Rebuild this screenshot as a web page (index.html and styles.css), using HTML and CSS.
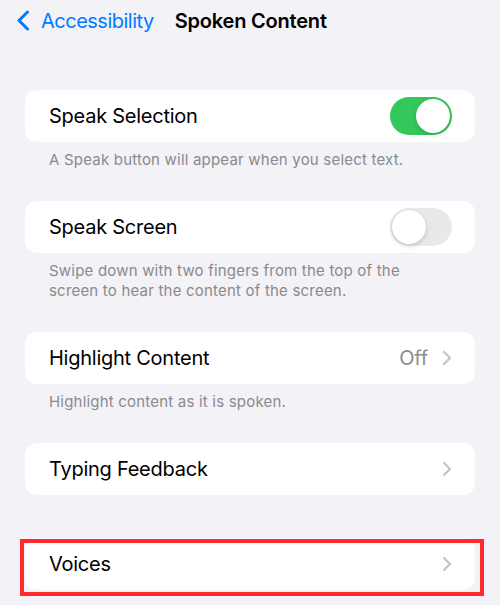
FILE: index.html
```html
<!DOCTYPE html>
<html lang="en">
<head>
<meta charset="utf-8">
<title>Spoken Content</title>
<link rel="stylesheet" href="styles.css">
</head>
<body>
<header class="navbar">
  <a class="back" href="#">
    <svg class="back-icon" width="14" height="21" viewBox="0 0 14 21" aria-hidden="true">
      <path d="M11.5 2 L3 10.5 L11.5 19" fill="none" stroke="currentColor" stroke-width="3" stroke-linecap="round" stroke-linejoin="round"/>
    </svg>
    <span>Accessibility</span>
  </a>
  <h1 class="title">Spoken Content</h1>
</header>

<main class="list">
  <section class="group">
    <div class="card row">
      <span class="label">Speak Selection</span>
      <span class="switch on"><span class="knob"></span></span>
    </div>
    <p class="footer">A Speak button will appear when you select text.</p>
  </section>

  <section class="group">
    <div class="card row">
      <span class="label">Speak Screen</span>
      <span class="switch"><span class="knob"></span></span>
    </div>
    <p class="footer">Swipe down with two fingers from the top of the screen to hear the content of the screen.</p>
  </section>

  <section class="group">
    <div class="card row">
      <span class="label">Highlight Content</span>
      <span class="detail">Off</span>
      <svg class="chevron" width="10" height="16" viewBox="0 0 10 16" aria-hidden="true">
        <path d="M2 2 L8 8 L2 14" fill="none" stroke="currentColor" stroke-width="2.2" stroke-linecap="round" stroke-linejoin="round"/>
      </svg>
    </div>
    <p class="footer">Highlight content as it is spoken.</p>
  </section>

  <section class="group no-footer">
    <div class="card row">
      <span class="label">Typing Feedback</span>
      <svg class="chevron" width="10" height="16" viewBox="0 0 10 16" aria-hidden="true">
        <path d="M2 2 L8 8 L2 14" fill="none" stroke="currentColor" stroke-width="2.2" stroke-linecap="round" stroke-linejoin="round"/>
      </svg>
    </div>
  </section>

  <section class="group">
    <div class="card row marked">
      <span class="label">Voices</span>
      <svg class="chevron" width="10" height="16" viewBox="0 0 10 16" aria-hidden="true">
        <path d="M2 2 L8 8 L2 14" fill="none" stroke="currentColor" stroke-width="2.2" stroke-linecap="round" stroke-linejoin="round"/>
      </svg>
      <span class="highlight-box"></span>
    </div>
  </section>
</main>
</body>
</html>
```

FILE: styles.css
```css
* {
  box-sizing: border-box;
}

html, body {
  margin: 0;
  padding: 0;
}

body {
  background: #f2f2f7;
  color: #000;
  font-family: Inter, "Noto Sans", "Liberation Sans", sans-serif;
  width: 500px;
  height: 605px;
  overflow: hidden;
}

/* Navigation bar */
.navbar {
  display: flex;
  align-items: center;
  height: 42px;
  padding: 0 0 1px 16px;
}

.back {
  display: flex;
  align-items: center;
  gap: 11px;
  color: #007aff;
  text-decoration: none;
  font-size: 20px;
  letter-spacing: -0.5px;
}

.back-icon {
  display: block;
}

.title {
  margin: 0 0 0 21px;
  font-size: 20px;
  font-weight: 600;
  letter-spacing: -0.2px;
}

/* Grouped list */
.list {
  padding: 48px 25px 0 25px;
}

.group {
  margin: 0;
}

.group.no-footer {
  padding-bottom: 43px;
}

.card {
  background: #fff;
  border-radius: 12px;
  height: 52px;
}

.row {
  display: flex;
  align-items: center;
  padding: 0 23px 0 24px;
  position: relative;
}

.label {
  flex: 1;
  font-size: 20px;
  letter-spacing: -0.25px;
}

.detail {
  font-size: 20px;
  color: #8a8a8e;
  margin-right: 14px;
  letter-spacing: -0.2px;
}

.chevron {
  display: block;
  color: #c4c4c7;
}

.footer {
  margin: 0;
  padding: 8px 36px 31px 24px;
  font-size: 15px;
  line-height: 20px;
  color: #8a8a8e;
  letter-spacing: 0.2px;
}

/* Toggle switch */
.switch {
  position: relative;
  width: 62px;
  height: 38px;
  border-radius: 19px;
  background: #e9e9eb;
}

.switch .knob {
  position: absolute;
  top: 2px;
  left: 2px;
  width: 34px;
  height: 34px;
  border-radius: 50%;
  background: #fff;
  box-shadow: 0 2px 5px rgba(0, 0, 0, 0.15), 0 0 1px rgba(0, 0, 0, 0.12);
}

.switch.on {
  background: #34c759;
}

.switch.on .knob {
  left: 26px;
}

/* Red annotation frame around the Voices row */
.highlight-box {
  position: absolute;
  left: -5px;
  top: 1px;
  right: -9px;
  bottom: -6px;
  border: 4px solid #fc2b2e;
  pointer-events: none;
}
```
